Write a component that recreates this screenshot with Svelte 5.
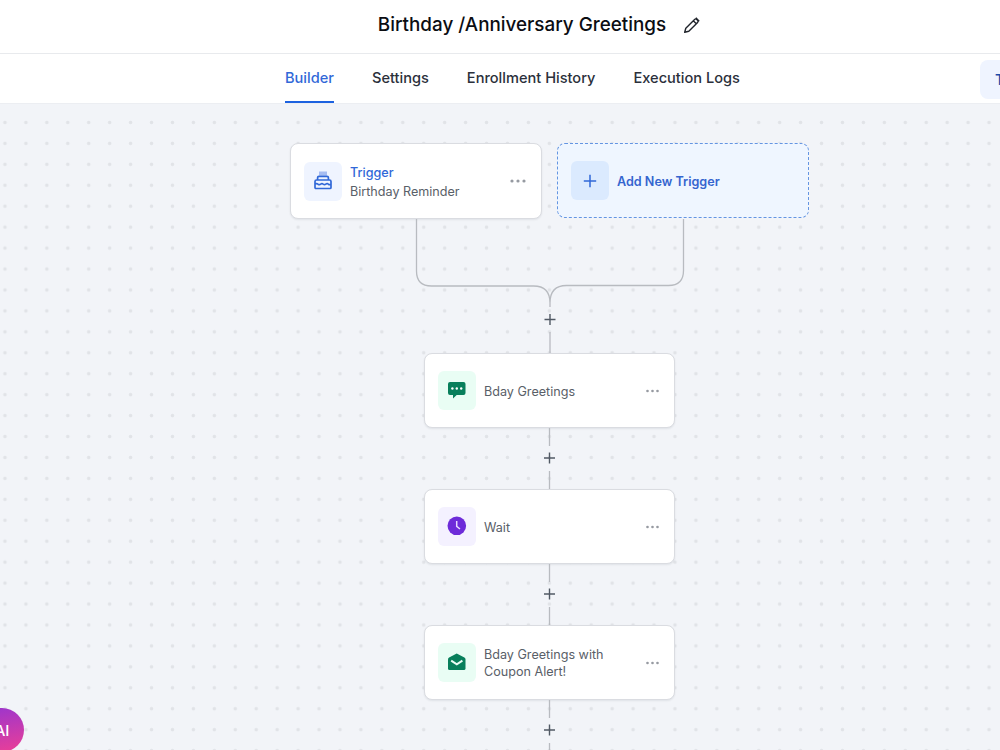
<script lang="ts">
	type Step = { label: string; icon: 'sms' | 'wait' | 'email'; tone: string };

	let activeTab = $state('Builder');

	const tabs = ['Builder', 'Settings', 'Enrollment History', 'Execution Logs'];

	const steps: Step[] = [
		{ label: 'Bday Greetings', icon: 'sms', tone: 'green' },
		{ label: 'Wait', icon: 'wait', tone: 'purple' },
		{ label: 'Bday Greetings with Coupon Alert!', icon: 'email', tone: 'green' }
	];
</script>

{#snippet more()}
	<button class="more" aria-label="More options">
		<svg width="18" height="6" viewBox="0 0 18 6">
			<circle cx="3" cy="3" r="1.6" />
			<circle cx="9" cy="3" r="1.6" />
			<circle cx="15" cy="3" r="1.6" />
		</svg>
	</button>
{/snippet}

<div class="page">
	<header class="title-bar">
		<h1>Birthday /Anniversary Greetings</h1>
		<button class="edit" aria-label="Rename workflow">
			<svg width="18" height="18" viewBox="0 0 18 18">
				<path d="M1.7 16.3 2.8 12.2 11.6 3.4a1.5 1.5 0 0 1 2.1 0l.9.9a1.5 1.5 0 0 1 0 2.1L5.8 15.2ZM10.3 4.7l3 3M12.8 1.8l3.4 3.4" />
			</svg>
		</button>
	</header>

	<nav class="tabs">
		{#each tabs as tab}
			<button class="tab" class:active={activeTab === tab} onclick={() => (activeTab = tab)}>{tab}</button>
		{/each}
		<button class="test">Test Workflow</button>
	</nav>

	<main class="canvas">
		<div class="triggers">
			<div class="card trigger">
				<span class="icon blue">
					<svg width="20" height="20" viewBox="0 0 20 20">
						<path class="candles" d="M7 .5v3.900M9 .5v3.900M11 .5v3.900M13 .5v3.900" />
						<path class="cake" d="M4.6 9V6.800q0-1.400 1.400-1.400h8q1.400 0 1.400 1.400V9M3.500 9h13q1.500 0 1.500 1.500v6q0 1-1 1H3q-1 0-1-1v-6Q2 9 3.500 9ZM2 13.200q1.500-1.200 3 0 1.500 1 2.700 0 1.300-1 2.500 0 1.300 1 2.600 0 1.300-1 2.600 0 1.200.8 2.600 0" />
					</svg>
				</span>
				<span class="text">
					<span class="kind">Trigger</span>
					<span>Birthday Reminder</span>
				</span>
				{@render more()}
			</div>
			<button class="card add">
				<span class="icon sky">
					<svg width="14" height="14" viewBox="0 0 14 14"><path class="plus-blue" d="M7 .8v12.400M.8 7h12.400" /></svg>
				</span>
				<span class="text">Add New Trigger</span>
			</button>
		</div>

		<svg class="merge" width="270" height="134" viewBox="0 0 270 134">
			<path d="M1.500 0v52q0 15 15 15h102q16.500 0 16.500 17M268.500 0v51.500q0 15-15 15h-102q-16.500 0-16.500 17.500v4M135 113v21" />
			<path class="plus" d="M135 95v11M129.500 100.500h11" />
		</svg>

		{#each steps as step}
			<div class="card step">
				<span class="icon {step.tone}">
					<svg width="20" height="20" viewBox="0 0 20 20">
						{#if step.icon === 'sms'}
							<path fill="#087f5b" d="M3 2h13.500a2 2 0 0 1 2 2v9a2 2 0 0 1-2 2H9.700L6 18.600V15H3a2 2 0 0 1-2-2V4a2 2 0 0 1 2-2Z" />
							<g fill="#fff"><circle cx="5.400" cy="8.500" r="1.200" /><circle cx="9.800" cy="8.500" r="1.200" /><circle cx="14.200" cy="8.500" r="1.200" /></g>
						{:else if step.icon === 'wait'}
							<circle cx="9.800" cy="9.800" r="9.300" fill="#6d2bd9" />
							<path class="hands" d="M9.700 5V10.300l3.300 2.700" />
						{:else}
							<path fill="#087f5b" d="M9.700 1.500 17.400 5.600q1.100.6 1.100 1.800v9a1.600 1.600 0 0 1-1.600 1.600H2.600A1.600 1.600 0 0 1 1 16.400v-9q0-1.200 1.100-1.800Z" />
							<path class="flap" d="m4.200 8.600 5.600 3.700 5.600-3.700" />
						{/if}
					</svg>
				</span>
				<span class="text">{step.label}</span>
				{@render more()}
			</div>
			<svg class="link" width="21" height="61" viewBox="0 0 21 61">
				<path d="M10.500 0v18M10.500 43v18" />
				<path class="plus" d="M10.500 24.500v11M5 30h11" />
			</svg>
		{/each}
	</main>

	<button class="ai">AI</button>
</div>

<style>
	:global(body) {
		margin: 0;
		overflow: hidden;
	}

	.page {
		width: 1000px;
		height: 750px;
		overflow: hidden;
		display: flex;
		flex-direction: column;
		position: relative;
		background: #fff;
		font-family: Inter, sans-serif;
	}

	button {
		font-family: inherit;
		border: 0;
		padding: 0;
		background: none;
		cursor: pointer;
	}

	svg {
		display: block;
		fill: none;
	}

	.title-bar {
		flex: none;
		display: flex;
		align-items: center;
		justify-content: center;
		gap: 17px;
		box-sizing: border-box;
		height: 54px;
		padding: 0 0 4px 79px;
		border-bottom: 1px solid #e8eaed;
	}

	h1 {
		margin: 0;
		font-size: 18.850px;
		font-weight: 500;
		line-height: 28px;
		color: #0b0d12;
	}

	.edit svg {
		stroke: #20242b;
		stroke-width: 1.4;
		stroke-linejoin: round;
	}

	.tabs {
		flex: none;
		display: flex;
		gap: 38px;
		height: 49px;
		padding-left: 285px;
	}

	.tab {
		flex: none;
		border-bottom: 2px solid transparent;
		font-size: 14.600px;
		font-weight: 500;
		color: #2b303b;
	}

	.tab.active {
		color: #3168d8;
		border-color: #1d62e0;
	}

	.test {
		flex: none;
		align-self: flex-start;
		box-sizing: border-box;
		width: 140px;
		height: 39px;
		margin: 6px 0 0 202px;
		padding-left: 15px;
		border-radius: 8px;
		background: #eff4ff;
		color: #1d4ba8;
		font-size: 14.500px;
		font-weight: 500;
		text-align: left;
	}

	.canvas {
		flex: 1;
		min-height: 0;
		display: flex;
		flex-direction: column;
		align-items: center;
		padding: 40px 0 0 99px;
		background: #f2f4f8 radial-gradient(circle at center, #e1e3e7 1.300px, transparent 2.200px) -5.500px 9px / 20.950px 20.950px;
		box-shadow: inset 0 1px #eceef2;
	}

	.triggers {
		display: flex;
		gap: 15px;
	}

	.card {
		flex: none;
		display: flex;
		align-items: center;
		box-sizing: border-box;
		width: 252px;
		height: 76px;
		padding: 0 14px 0 13px;
		border: 1px solid #dadce1;
		border-radius: 8px;
		background: #fff;
		box-shadow: 0 1px 2px #10182814;
		color: #596068;
		font-size: 12.600px;
		line-height: 17px;
		text-align: left;
	}

	.add {
		height: 75px;
		border: 1px dashed #6495e2;
		background: #eff6ff;
		box-shadow: none;
		color: #3565cf;
		font-weight: 600;
	}

	.step {
		width: 251px;
		height: 75px;
	}

	.icon {
		flex: none;
		display: flex;
		align-items: center;
		justify-content: center;
		width: 38px;
		height: 39px;
		margin-right: 8px;
		border-radius: 6px;
	}

	.step .icon {
		margin-bottom: 1px;
	}

	.blue {
		background: #eff4ff;
	}

	.sky {
		background: #dbeafe;
	}

	.green {
		background: #e9fdf4;
	}

	.purple {
		background: #f4f1ff;
	}

	.text {
		flex: 1;
		padding: 1px 30px 0 0;
	}

	.trigger .text {
		display: flex;
		flex-direction: column;
		gap: 2px;
		padding-right: 0;
	}

	.kind {
		color: #3168d8;
		font-weight: 500;
	}

	.more svg {
		fill: #969aa1;
	}

	.step .more svg {
		width: 15px;
	}

	.candles {
		stroke: #7597e8;
		stroke-width: 1.200;
	}

	.cake {
		stroke: #3168d8;
		stroke-width: 1.700;
	}

	.plus-blue {
		stroke: #3168d8;
		stroke-width: 1.500;
	}

	.hands {
		stroke: #e7d9ff;
		stroke-width: 1.500;
	}

	.flap {
		stroke: #e9fdf4;
		stroke-width: 2;
	}

	.merge,
	.link {
		flex: none;
		stroke: #b8bbc0;
		stroke-width: 1.300;
	}

	.plus {
		stroke: #515964;
		stroke-width: 1.400;
	}

	.ai {
		position: absolute;
		left: -20px;
		top: 708px;
		width: 44px;
		height: 44px;
		border-radius: 50%;
		background: linear-gradient(170deg, #9a35ce, #ec3f96);
		color: #fff;
		font-size: 15px;
		font-weight: 500;
	}
</style>
